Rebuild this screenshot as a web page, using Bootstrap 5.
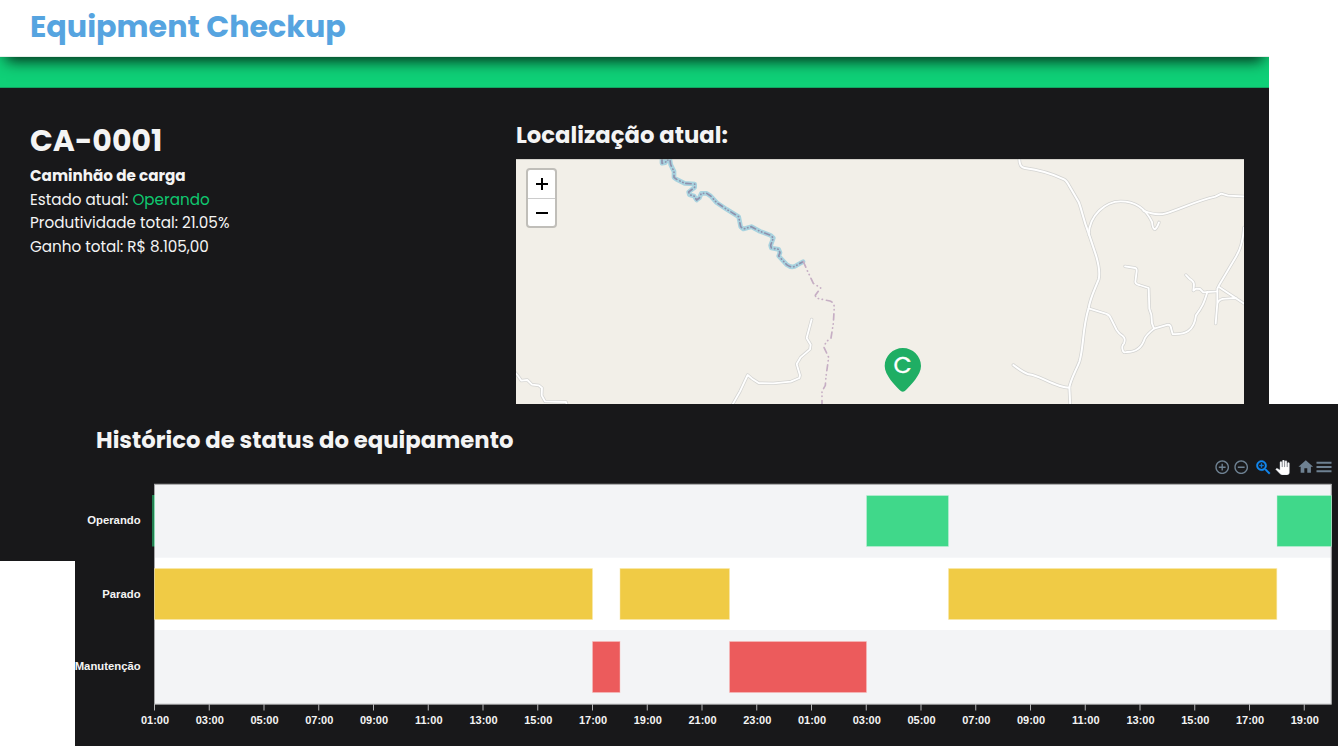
<!DOCTYPE html>
<html lang="pt-BR">
<head>
<meta charset="utf-8">
<meta name="viewport" content="width=device-width, initial-scale=1">
<title>Equipment Checkup</title>
<link href="https://cdn.jsdelivr.net/npm/bootstrap@5.3.0/dist/css/bootstrap.min.css" rel="stylesheet">
<style>
  body { font-family: Poppins, Inter, sans-serif; color: #f4f4f4; background: #fff; height: 746px; overflow: hidden; }
  .page-header { width: 1269px; height: 57px; padding-left: 30px; background: #fff; z-index: 1; border-bottom: 1px solid #e4efe9; box-shadow: 0 10px 14px -6px rgba(0, 0, 0, .8); clip-path: inset(0 0 -30px 0); }
  .page-title { color: #56a4e0; font-size: 30.2px; font-weight: 700; line-height: 1; padding-bottom: 2px; }
  .green-strip { width: 1269px; height: 31px; background: #0fd077; border-bottom: 1px solid #12a562; }
  .equipment { width: 1269px; height: 473px; background: #18181a; padding: 34px 25px 0 30px; }
  .info { width: 486px; flex: none; }
  .info h2 { font-size: 30px; font-weight: 700; line-height: 38px; margin-bottom: 4px; }
  .info p { font-size: 15.2px; line-height: 23.7px; margin: 0; white-space: nowrap; }
  .ok { color: #0fc870; }
  .section-title { font-size: 22.75px; font-weight: 700; line-height: 26px; margin: 0; }
  .map-box { height: 245px; margin-top: 11px; background: #f2efe8; }
  .zoom-ctl { left: 10px; top: 9px; width: 31px; height: 60px; border: 2px solid #c0beb9; border-radius: 4px; background: #fff; color: #000; z-index: 1; overflow: hidden; }
  .zoom-ctl div { height: 29px; }
  .zoom-ctl div:first-child { border-bottom: 1px solid #ccc; }
  .zoom-ctl div:last-child { height: 27px; }
  .history { width: 1263px; height: 342px; margin-left: 75px; margin-top: -157px; background: #18181a; z-index: 2; overflow: hidden; }
  .history .section-title { padding: 23px 0 0 21px; line-height: 26px; }
  .tools { height: 20px; margin-top: 4px; padding-right: 3.7px; color: #6e8192; }
  .tools svg { fill: currentColor; flex: none; }
  .axis-text { font-family: "Liberation Sans", sans-serif; font-weight: 700; fill: #f4f4f4; }
</style>
</head>
<body>
<header class="page-header position-relative d-flex align-items-center">
  <h1 class="page-title mb-0">Equipment Checkup</h1>
</header>
<div class="green-strip"></div>
<main>
  <section class="equipment d-flex">
    <div class="info">
      <h2>CA-0001</h2>
      <p class="fw-bold">Caminhão de carga</p>
      <p>Estado atual: <span class="ok">Operando</span></p>
      <p>Produtividade total: 21.05%</p>
      <p>Ganho total: R$ 8.105,00</p>
    </div>
    <div class="flex-grow-1">
      <h3 class="section-title">Localização atual:</h3>
      <div class="map-box position-relative">
        <div class="zoom-ctl position-absolute">
          <div class="d-flex align-items-center justify-content-center"><svg width="12" height="12" stroke="#000" stroke-width="2"><path d="M6 0v12M0 6h12"/></svg></div>
          <div class="d-flex align-items-center justify-content-center"><svg width="12" height="12" stroke="#000" stroke-width="2"><path d="M0 6h12"/></svg></div>
        </div>
        <svg class="d-block" width="728" height="245" viewBox="516 159 728 245" fill="none" stroke-linejoin="round" stroke-linecap="round">
          <defs>
            <g id="roadsWest">
              <path d="M40 782L52 795 64 812 82 810 96 824 116 826 126 834 125 856 135 874 198 876 202 890"/>
              <path d="M694 890L720 844 743 795 756 806 776 819 820 820 872 815 898 804 900 796 890 762 902 742 930 718 932 704 920 684 935 628"/>
            </g>
            <g id="roadsMid">
              <path d="M418 20Q416 52 434 54C480 60 510 68 552 88Q560 92 568 108L596 156C606 180 608 204 626 250L648 316Q662 364 656 388C642 424 632 440 626 474C606 540 612 590 598 636C586 666 574 684 568 712L571 770"/>
              <path d="M400 645Q430 668 446 673C474 676 498 694 540 708Q556 713 568 713"/>
            </g>
            <g id="roadsEast">
              <path d="M26 134C28 76 76 34 122 34C170 34 200 62 216 96Q218 116 224 118Q230 116 237 97"/>
              <path d="M190 62Q228 78 258 70C300 58 350 32 406 20L424 11 444 17 500 20"/>
              <path d="M135 229L166 234Q171 236 170 244L166 276Q166 282 178 285L206 294 208 356 214 374 216 400 222 416 264 404Q272 404 273 414L278 432C316 434 342 424 348 376C366 352 372 340 382 306"/>
              <path d="M26 355L80 372Q88 374 92 384L110 420Q116 430 128 438Q138 446 132 460Q124 468 128 480 130 490 140 486C166 486 186 472 194 446Q200 434 222 416"/>
              <path d="M318 255L328 266Q342 274 342 284L340 302 348 296 360 297 370 307 412 304 412 296 418 284 468 200Q488 168 492 112"/>
              <path d="M412 304L412 340 407 401M418 292L500 346M412 340Q418 326 436 326L468 324"/>
            </g>
            <path id="river" d="M66 26L66 40 76 38 80 30 90 30 92 44 102 64 102 82 110 88 134 100 164 102 164 112 146 126 148 134 162 138 170 150 178 144 184 130 200 130 212 138 230 158 260 178 296 200 302 230 310 237 334 230 360 244 392 256 400 264 392 286 394 294 416 298 420 308 416 318 440 344Q456 356 470 346L489 335"/>
          </defs>
          <g transform="translate(500 110) scale(.33333)">
            <use href="#roadsWest" stroke="#d4d4d2" stroke-width="10"/><use href="#roadsWest" stroke="#fff" stroke-width="5.5"/>
          </g>
          <g transform="translate(880 150) scale(.33333)">
            <use href="#roadsMid" stroke="#d4d4d2" stroke-width="10.5"/>
          </g>
          <g transform="translate(1080 190) scale(.33333)">
            <use href="#roadsEast" stroke="#d4d4d2" stroke-width="10"/><use href="#roadsEast" stroke="#fff" stroke-width="5.5"/>
          </g>
          <g transform="translate(880 150) scale(.33333)">
            <use href="#roadsMid" stroke="#fff" stroke-width="6"/>
          </g>
          <g transform="translate(640 150) scale(.33333)">
            <use href="#river" stroke="#a9d3df" stroke-width="14"/>
            <use href="#river" stroke="#8f91ad" stroke-width="5" stroke-dasharray="16 10 1 9 1 9"/>
          </g>
          <path transform="translate(500 110) scale(.33333)" d="M910 455L922 482 940 520 962 534 946 556 948 564 990 573Q1000 576 1003 590L1000 640 993 684 978 696 972 712 986 742 978 800 976 826 966 844 966 884" stroke="#c6aec4" stroke-width="5" stroke-dasharray="18 12 1 11 1 12"/>
          <path d="M902.8 348C912.8 348 921 356 921 366C921 375 910.500 385.500 906 390Q902.800 393.500 899.600 390C895 385.500 884.700 375 884.700 366C884.700 356 893 348 902.800 348Z" fill="#1fae64"/>
          <text x="902.700" y="373" text-anchor="middle" font-size="23.500" font-weight="400" fill="#fff" stroke="#fff" stroke-width=".3">C</text>
          <path d="M516 159.200h728" stroke="#aaa8a5" stroke-width=".6"/>
        </svg>
      </div>
    </div>
  </section>

  <section class="history position-relative">
    <h3 class="section-title">Histórico de status do equipamento</h3>
    <div class="tools d-flex justify-content-end align-items-center">
      <svg width="16.4" height="16.4" viewBox="0 0 24 24"><path d="M13 7h-2v4H7v2h4v4h2v-4h4v-2h-4V7zm-1-5C6.480 2 2 6.480 2 12s4.480 10 10 10 10-4.480 10-10S17.520 2 12 2zm0 18c-4.410 0-8-3.590-8-8s3.590-8 8-8 8 3.590 8 8-3.590 8-8 8z"/></svg>
      <svg style="margin-left:2.3px" width="16.4" height="16.4" viewBox="0 0 24 24"><path d="M7 11v2h10v-2H7zm5-9C6.480 2 2 6.480 2 12s4.480 10 10 10 10-4.480 10-10S17.520 2 12 2zm0 18c-4.410 0-8-3.590-8-8s3.590-8 8-8 8 3.590 8 8-3.590 8-8 8z"/></svg>
      <svg style="margin-left:4.7px;color:#1387ee" width="19" height="19" viewBox="0 0 24 24" stroke="currentColor" stroke-width=".5"><path d="M15.500 14h-.79l-.28-.27C15.410 12.590 16 11.110 16 9.500 16 5.910 13.090 3 9.500 3S3 5.910 3 9.500 5.910 16 9.500 16c1.610 0 3.090-.59 4.230-1.570l.27.28v.79l5 4.990L20.490 19l-4.990-5zm-6 0C7.010 14 5 11.990 5 9.500S7.010 5 9.500 5 14 7.010 14 9.500 11.990 14 9.500 14z"/><path d="M12 10h-2v2H9v-2H7V9h2V7h1v2h2v1z"/></svg>
      <svg style="margin-left:2.200px;color:#fff" width="15" height="15" viewBox="0 0 24 24"><path stroke="#b9c2ca" stroke-width=".7" d="M23 5.500V20c0 2.200-1.800 4-4 4h-7.300c-1.080 0-2.100-.43-2.850-1.190L1 14.830s1.260-1.230 1.300-1.250c.22-.19.49-.29.79-.29.22 0 .42.06.6.16.04.01 4.310 2.460 4.310 2.460V4c0-.83.67-1.500 1.500-1.500S11 3.170 11 4v7h1V1.500c0-.83.67-1.500 1.500-1.500S15 .67 15 1.500V11h1V2.500c0-.83.67-1.500 1.500-1.500s1.500.67 1.500 1.500V11h1V5.500c0-.83.67-1.500 1.500-1.500s1.500.67 1.500 1.500z"/></svg>
      <svg style="margin-left:6.8px" width="17.6" height="17.6" viewBox="0 0 24 24"><path d="M10 20v-6h4v6h5v-8h3L12 3 2 12h3v8z"/></svg>
      <svg width="20" height="20" viewBox="0 0 24 24"><path d="M3 18.200h18v-2.300H3zM3 13.150h18v-2.300H3zM3 5.800v2.300h18V5.800z"/></svg>
    </div>
    <svg class="d-block" width="1263" height="269" viewBox="75 477 1263 269">
      <rect x="154" y="484" width="1177.500" height="220.500" fill="#f3f4f6"/>
      <rect x="154" y="557.700" width="1177" height="72.300" fill="#fff"/>
      <path d="M154 484.200h1177.500M154 704.300h1177.500" stroke="#8e8e90"/>
      <path d="M154.500 484v220M1331.300 484v220" stroke="#a5a5a7"/>
      <g stroke-opacity=".5" stroke-width="1">
        <path d="M153 495v51.500" stroke="#27a566" stroke-opacity="1" stroke-width="1.500"/>
        <path d="M154.500 495v51.500" stroke="#8fdcb5" stroke-opacity="1"/>
        <g fill="#40d88a" stroke="#c5f0d9">
          <rect x="866.500" y="495.500" width="82" height="51"/>
          <path d="M1331.500 495.500h-54.500v51h54.500z"/>
        </g>
        <g fill="#f0cb45" stroke="#faeaae">
          <rect x="154.500" y="568.500" width="438" height="51"/>
          <rect x="620" y="568.500" width="109.500" height="51"/>
          <rect x="948.500" y="568.500" width="328.300" height="51"/>
        </g>
        <g fill="#ec5b5c" stroke="#f8c0c0">
          <rect x="592.500" y="641.500" width="27.500" height="51"/>
          <rect x="729.500" y="641.500" width="137" height="51"/>
        </g>
      </g>
      <g class="axis-text" font-size="11.300" text-anchor="end">
        <text x="140.600" y="524">Operando</text>
        <text x="140.600" y="597.500">Parado</text>
        <text x="140.600" y="670">Manutenção</text>
      </g>
      <g id="ticks" class="axis-text" font-size="11" text-anchor="middle"></g>
    </svg>
  </section>
</main>
<script>
  // One tick every two hours, starting at 01:00
  const ns = 'http://www.w3.org/2000/svg', ticks = document.getElementById('ticks');
  for (let i = 0; i < 22; i++) {
    const x = 154.5 + i * 54.75;
    const line = document.createElementNS(ns, 'path');
    line.setAttribute('d', `M${x} 704v6.500`);
    line.setAttribute('stroke', '#b4b4b6');
    const label = document.createElementNS(ns, 'text');
    label.setAttribute('x', x + 0.5);
    label.setAttribute('y', 724);
    label.textContent = String((1 + 2 * i) % 24).padStart(2, '0') + ':00';
    ticks.append(line, label);
  }
</script>
<script src="https://cdn.jsdelivr.net/npm/bootstrap@5.3.0/dist/js/bootstrap.bundle.min.js"></script>
</body>
</html>
